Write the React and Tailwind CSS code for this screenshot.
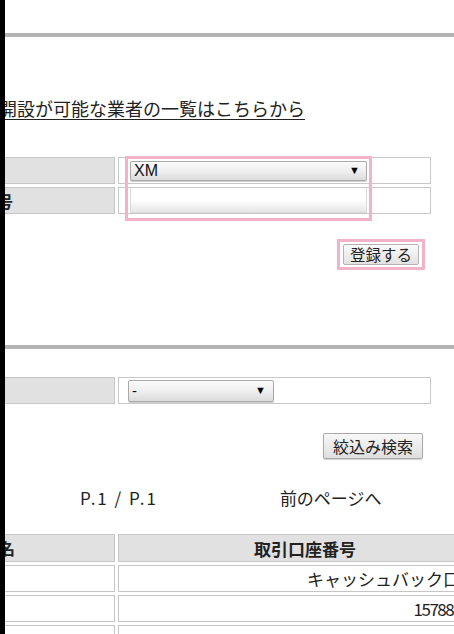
import React from "react";

const JP = { fontFamily: '"Noto Sans CJK JP", "Noto Sans", sans-serif' };
const SANS = { fontFamily: '"Liberation Sans", Arial, sans-serif' };

function FakeSelect({ w, h, label, arrowRight = 8, size = "text-[15px]" }) {
  return (
    <div
      className={`${w} ${h} flex items-center justify-between rounded-[2px] border border-[#a9a9a9] bg-gradient-to-b from-[#fbfbfb] via-[#efefef] to-[#dcdcdc] pl-[3px] shadow-[0_1px_0_#cfcfcf]`}
      style={{ paddingRight: arrowRight }}
    >
      <span className={`${size} leading-none text-[#111]`} style={SANS}>
        {label}
      </span>
      <span className="text-[11px] leading-none text-black" style={SANS}>
        ▼
      </span>
    </div>
  );
}

function LabelCell({ children, shift, h = "h-[27px]" }) {
  return (
    <div
      className={`w-[110px] shrink-0 ${h} overflow-hidden border border-l-0 border-[#c6c6c6] bg-[#e1e1e1] flex items-center`}
    >
      <span
        className="whitespace-nowrap text-[16px] font-bold leading-none text-[#222]"
        style={{ marginLeft: shift }}
      >
        {children}
      </span>
    </div>
  );
}

function DataRow({ value, digits }) {
  return (
    <div className="flex h-[27px] gap-[3px]">
      <div className="w-[110px] shrink-0 border border-l-0 border-[#c6c6c6] bg-white" />
      <div className="flex w-[374px] shrink-0 items-center justify-end border border-[#c6c6c6] bg-white pr-[14px]">
        <span
          className={`whitespace-nowrap text-[17px] leading-none text-[#222] ${
            digits ? "tracking-[-1.5px]" : ""
          }`}
        >
          {value}
        </span>
      </div>
    </div>
  );
}

export default function App() {
  return (
    <div
      className="flex h-[634px] w-[454px] overflow-hidden bg-white text-[#222]"
      style={JP}
    >
      <div className="w-[5px] shrink-0 bg-black" />
      <div className="relative flex min-w-0 flex-1 flex-col overflow-hidden">
        <div className="h-[33px] shrink-0" />
        <div className="h-[4px] shrink-0 bg-[#b4b4b4]" />

        <div className="mt-[58px] ml-[-42px] h-[26px] shrink-0 whitespace-nowrap text-[18px] leading-[26px] text-[#222] underline underline-offset-[3px]">
          口座開設が可能な業者の一覧はこちらから
        </div>

        {/* registration table */}
        <div className="mt-[36px] flex shrink-0 flex-col gap-[3px]">
          <div className="flex h-[27px] gap-[3px]">
            <LabelCell shift={-88}>取引業者</LabelCell>
            <div className="flex w-[313px] shrink-0 items-center border border-[#c8c8c8] bg-white pl-[11px]">
              <FakeSelect w="w-[237px]" h="h-[20px]" label="XM" arrowRight={6} size="text-[16px]" />
            </div>
          </div>
          <div className="flex h-[27px] gap-[3px]">
            <LabelCell shift={-88}>取引口座番号</LabelCell>
            <div className="flex w-[313px] shrink-0 items-stretch border border-[#c8c8c8] bg-white pl-[11px]">
              <div className="w-[237px] border border-t-0 border-[#dadada] bg-gradient-to-b from-white via-white to-[#e6e6e6]" />
            </div>
          </div>
        </div>

        {/* pink highlight around select/input */}
        <div className="pointer-events-none absolute left-[120px] top-[156px] h-[65px] w-[247px] border-[3px] border-[#f2b2c8]" />

        <div className="mt-[30px] flex shrink-0 justify-end pr-[35px]">
          <div className="flex h-[21px] w-[76px] items-center justify-center rounded-[2px] border border-[#b3b3b3] bg-gradient-to-b from-[#fafafa] to-[#e2e2e2] text-[15.5px] leading-none text-[#222]">
            登録する
          </div>
        </div>
        <div className="pointer-events-none absolute left-[332px] top-[239px] h-[31px] w-[88px] border-[3px] border-[#f2b2c8]" />

        <div className="mt-[80px] h-[4px] shrink-0 bg-[#b4b4b4]" />

        {/* filter table */}
        <div className="mt-[28px] flex h-[27px] shrink-0 gap-[3px]">
          <LabelCell shift={-88}>取引業者</LabelCell>
          <div className="flex w-[313px] shrink-0 items-center border border-[#c8c8c8] bg-white pl-[9px]">
            <FakeSelect w="w-[146px]" h="h-[22px]" label="-" arrowRight={7} />
          </div>
        </div>

        <div className="mt-[29px] flex shrink-0 justify-end pr-[31px]">
          <div className="flex h-[26px] w-[100px] items-center justify-center rounded-[2px] border border-[#a9a9a9] bg-gradient-to-b from-[#f8f8f8] to-[#dedede] text-[16px] leading-none text-[#222] shadow-[0_1px_1px_#cfcfcf]">
            絞込み検索
          </div>
        </div>

        {/* pagination */}
        <div className="mt-[27px] flex h-[24px] shrink-0 items-center text-[17px] leading-[24px]">
          <span className="ml-[75px] whitespace-nowrap tracking-[2px]">P.1 / P.1</span>
          <span className="ml-[122px] whitespace-nowrap">前のページへ</span>
        </div>

        {/* list table */}
        <div className="mt-[24px] flex shrink-0 flex-col gap-[3px]">
          <div className="flex h-[28px] gap-[3px]">
            <LabelCell shift={-38} h="h-[28px]">業者名</LabelCell>
            <div className="flex w-[374px] shrink-0 items-center justify-center border border-[#c6c6c6] bg-[#e1e1e1]">
              <span className="whitespace-nowrap text-[17px] font-bold leading-none text-[#222]">
                取引口座番号
              </span>
            </div>
          </div>
          <DataRow value="キャッシュバック口座" />
          <DataRow value="15788420" digits />
          <DataRow value="78882791" digits />
        </div>
      </div>
    </div>
  );
}
